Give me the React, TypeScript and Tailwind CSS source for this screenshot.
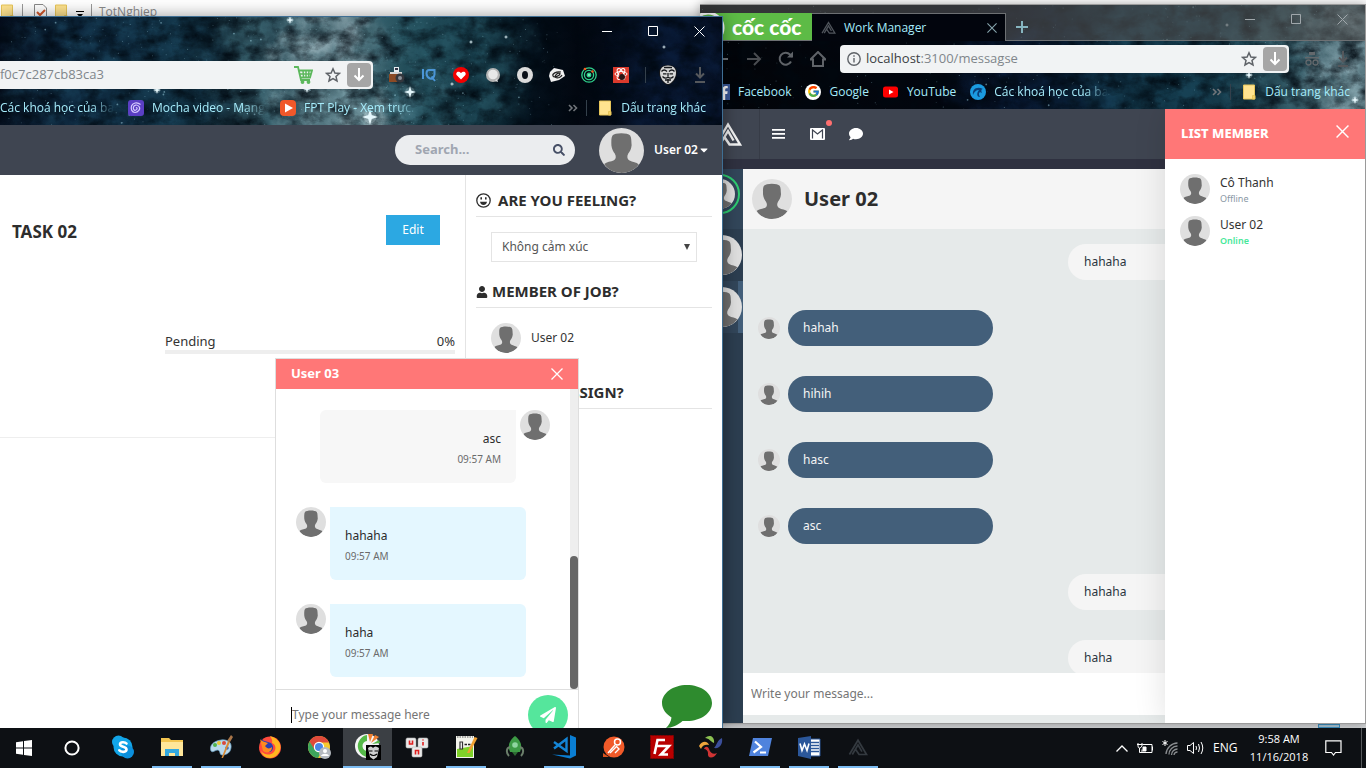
import React from "react";
import type { ReactNode } from "react";
import { FcGoogle } from "react-icons/fc";
import {
  FaCaretDown,
  FaComment,
  FaFacebookF,
  FaPaperPlane,
  FaSearch,
  FaUser,
} from "react-icons/fa";

/* ---------- shared drawings ---------- */

function Avatar({ className }: { className: string }) {
  return (
    <svg viewBox="0 0 120 120" className={`shrink-0 rounded-full ${className}`} aria-hidden="true">
      <rect width="120" height="120" fill="#dfdfdf" />
      <path
        fill="#6f6f6f"
        d="M36 20C42 12 77 12 83 20C87 26 86 36 87 46C86 57 82 63 78 68C74 75 75 82 80 86C90 92 100 91 106 97C95 113 78 120 60 120C42 120 24 113 14 96C20 90 32 90 40 86C46 82 46 75 42 68C38 63 34 56 33 46C33 36 32 26 36 20Z"
      />
    </svg>
  );
}

type Cloud = [number, number, number, number, string, number];

function Galaxy({ id, base, clouds, bright, count, width }: { id: string; base: [string, string][]; clouds: Cloud[]; bright: [number, number, number][]; count: number; width: number }) {
  let s = id.length * 7919 + 17;
  const rnd = () => {
    s = (s * 16807) % 2147483647;
    return s / 2147483647;
  };
  const stars = Array.from({ length: count }, () => [rnd() * width, rnd() * 110, rnd()]);
  return (
    <svg className="absolute inset-0 h-full w-full" aria-hidden="true">
      <defs>
        <linearGradient id={`${id}-base`}>
          {base.map(([offset, color]) => (
            <stop key={offset} offset={offset} stopColor={color} />
          ))}
        </linearGradient>
        <filter id={`${id}-cloud`} x="-20%" y="-60%" width="140%" height="220%" colorInterpolationFilters="sRGB">
          <feGaussianBlur stdDeviation="12" result="b" />
          <feTurbulence type="fractalNoise" baseFrequency="0.04" numOctaves="5" seed="8" result="n" />
          <feDisplacementMap in="b" in2="n" scale="60" xChannelSelector="R" yChannelSelector="G" result="d" />
          <feTurbulence type="fractalNoise" baseFrequency="0.05" numOctaves="6" seed="21" />
          <feColorMatrix values="0 0 0 0 1  0 0 0 0 1  0 0 0 0 1  2 0 0 0 -0.45" result="m" />
          <feComposite in="d" in2="m" operator="in" />
        </filter>
        <filter id={`${id}-grain`} x="0" y="0" width="100%" height="100%" colorInterpolationFilters="sRGB">
          <feTurbulence type="fractalNoise" baseFrequency="0.05 0.07" numOctaves="6" seed="5" />
          <feColorMatrix values="0 0 0 0 0  0 0 0 0 0.03  0 0 0 0 0.06  0 1.8 0 0 -0.7" />
        </filter>
      </defs>
      <rect width="100%" height="100%" fill={`url(#${id}-base)`} />
      <g filter={`url(#${id}-cloud)`}>
        {clouds.map(([x, y, rx, ry, c, o], i) => (
          <ellipse key={i} cx={x} cy={y} rx={rx} ry={ry} fill={c} opacity={o} />
        ))}
      </g>
      <rect width="100%" height="100%" filter={`url(#${id}-grain)`} />
      {stars.map(([x, y, r], i) => (
        <circle key={i} cx={x} cy={y} r={r > 0.95 ? 0.9 : 0.5} fill="#9fd0e0" opacity={0.12 + r * 0.4} />
      ))}
      {bright.map(([x, y, r], i) => (
        <g key={i} fill="#e4f6fb">
          <circle cx={x} cy={y} r={r * 1.6} opacity="0.25" />
          <path d={`M${x - r * 2} ${y}L${x} ${y - r * 0.6}L${x + r * 2} ${y}L${x} ${y + r * 0.6}ZM${x} ${y - r * 2}L${x + r * 0.6} ${y}L${x} ${y + r * 2}L${x - r * 0.6} ${y}Z`} />
        </g>
      ))}
    </svg>
  );
}

function WindowButtons({ color, height }: { color: string; height: string }) {
  const cell = `flex w-[46px] items-center justify-center ${height} ${color}`;
  return (
    <div className="ml-auto flex shrink-0">
      <button aria-label="Minimize" className={cell}>
        <svg width="11" height="11" fill="none" stroke="currentColor"><path d="M0 5.5H10" /></svg>
      </button>
      <button aria-label="Maximize" className={cell}>
        <svg width="11" height="11" fill="none" stroke="currentColor"><path d="M.5 .5H9.5V9.5H.5Z" /></svg>
      </button>
      <button aria-label="Close" className={cell}>
        <svg width="11" height="11" fill="none" stroke="currentColor"><path d="M.5 .5L10.5 10.5M10.5 .5L.5 10.5" /></svg>
      </button>
    </div>
  );
}

function Cross({ className }: { className: string }) {
  return (
    <svg viewBox="0 0 12 12" className={className} fill="none" stroke="currentColor" strokeWidth="1.3" aria-hidden="true">
      <path d="M.5 .5L11.5 11.5M11.5 .5L.5 11.5" />
    </svg>
  );
}

function StarIcon() {
  return (
    <svg width="16" height="16" viewBox="0 0 16 16" fill="none" stroke="#5f6368" strokeWidth="1.5" aria-hidden="true">
      <path d="M8 1.8L9.9 6L14.4 6.4L11 9.4L12 13.9L8 11.5L4 13.9L5 9.4L1.6 6.4L6.1 6Z" />
    </svg>
  );
}

function SaveButton() {
  return (
    <button aria-label="Save" className="flex h-6 w-6 items-center justify-center rounded-sm bg-[#a6a6a6]">
      <svg width="12" height="14" viewBox="0 0 12 14" fill="none" stroke="#fff" strokeWidth="2"><path d="M6 0V12M1.5 7.5L6 12L10.5 7.5" /></svg>
    </button>
  );
}

function DownloadIcon() {
  return (
    <svg width="12" height="16" viewBox="0 0 12 16" fill="none" stroke="#55585c" strokeWidth="2" aria-hidden="true">
      <path d="M6 0V10M2 6.5L6 10.5L10 6.5M1 15H11" />
    </svg>
  );
}

function CartIcon() {
  return (
    <svg width="19" height="18" viewBox="0 0 19 18" fill="none" stroke="#5cb85c" strokeWidth="1.8" aria-hidden="true">
      <path d="M0 1H4L7 14H16M5 4.500H18L16 11.500H6.500" />
      <path d="M5.500 8H17M9 4.500L9.500 11.500M12 4.500V11.500M15 4.500L14.500 11.500" strokeWidth="1.5" />
      <circle cx="8.500" cy="16" r="1" />
      <circle cx="14.500" cy="16" r="1" />
    </svg>
  );
}

function SmileIcon({ className }: { className: string }) {
  return (
    <svg viewBox="0 0 15 15" className={className} fill="none" stroke="#2d2d2d" strokeWidth="1.300" aria-hidden="true">
      <circle cx="7.500" cy="7.500" r="6.700" />
      <path d="M4 8.800H11C10.500 11 9.300 12 7.500 12S4.500 11 4 8.800Z" fill="#2d2d2d" stroke="none" />
      <path d="M5.200 4.200V6.400M9.800 4.200V6.400" strokeWidth="1.600" />
    </svg>
  );
}

function Folder() {
  return (
    <svg width="14" height="16" viewBox="0 0 14 16" className="shrink-0" aria-hidden="true">
      <path d="M.5 1H11.5V15H.5Z" fill="#ffe38f" stroke="#e8c65a" />
      <path d="M9.5 11.5H12V15H9.5Z" fill="#f7d266" stroke="#e8c65a" />
    </svg>
  );
}

function Bookmark({ icon, label, faded }: { icon?: ReactNode; label: string; faded?: boolean }) {
  return (
    <a href="#" className="flex shrink-0 items-center gap-2">
      {icon}
      <span className={faded ? "w-[114px] whitespace-nowrap [mask-image:linear-gradient(to_right,#000_80%,transparent)]" : "whitespace-nowrap"}>{label}</span>
    </a>
  );
}

function OtherBookmarks() {
  return (
    <div className="ml-auto flex shrink-0 items-center">
      <button aria-label="More bookmarks" className="mr-2 text-[#70757a]">
        <svg width="10" height="8" viewBox="0 0 10 8" fill="none" stroke="currentColor" strokeWidth="1.6"><path d="M1 1L4 4L1 7M5.5 1L8.5 4L5.5 7" /></svg>
      </button>
      <span className="mr-3 h-4 w-px bg-[#34404b]" />
      <Bookmark icon={<Folder />} label="Dấu trang khác" />
    </div>
  );
}

function Triangle({ className, color }: { className: string; color: string }) {
  return (
    <svg viewBox="0 0 28 24" className={className} fill="none" stroke={color} strokeWidth="2.4" aria-hidden="true">
      <path d="M2 22.5L14 2.5L26 22.5H15.5L10 14.5M6 22.5L14 9L19.5 18.5" />
    </svg>
  );
}

/* ---------- work manager: task page ---------- */

const ic = "h-4 w-4 shrink-0";

const extensions: [string, ReactNode][] = [
  ["Camera", <svg viewBox="0 0 16 16" className={ic}><path d="M5 0H10V5H5Z" fill="#e8edf0" /><path d="M6 1H9V3H6Z" fill="#334" /><path d="M1 5H13V9H1Z" fill="#d6d6d6" /><path d="M0 7H9V15H0Z" fill="#8a4a25" /><circle cx="11" cy="11" r="4.5" fill="#34373d" /><circle cx="11" cy="11" r="2" fill="#8a8f98" /></svg>],
  ["IQ", <svg viewBox="0 0 16 16" className={ic} fill="none" stroke="#4b95d6" strokeWidth="2"><path d="M2 2V12" /><path d="M12.5 3H8Q5.500 3 5.500 6.500T9 11.500T13.500 7.500V2M10.500 9.500L14 14" /></svg>],
  ["Favourites", <svg viewBox="0 0 16 16" className={ic}><circle cx="8" cy="8" r="8" fill="#f40000" /><path d="M8 12.5L3.800 8.300C2 6 5 3 8 6C11 3 14 6 12.200 8.300Z" fill="#fff" /></svg>],
  ["Lens", <svg viewBox="0 0 16 16" className={ic}><circle cx="8" cy="8" r="7" fill="#b5b5b5" /><circle cx="8" cy="7.500" r="4.800" fill="#e8e8e8" /><path d="M10 14L12 12L13 15Z" fill="#e0e0e0" /></svg>],
  ["Ring", <svg viewBox="0 0 16 16" className={ic}><circle cx="8" cy="8" r="8" fill="#dcdcdc" /><ellipse cx="8" cy="8" rx="3" ry="4" fill="#0a0f18" /></svg>],
  ["Swirl", <svg viewBox="0 0 16 16" className={ic}><path d="M1 5L5 1L14 3L16 9L10 13L2 15L0 9Z" fill="#f1f1f1" /><path d="M12 5C7 4 3 7 4 9S11 9 11 6.500C9 5 6 8 6 10C9 12 12 10 13 8" fill="none" stroke="#222" strokeWidth="1.200" /></svg>],
  ["Orbit", <svg viewBox="0 0 16 16" className={ic} fill="none" stroke="#2fd28c" strokeWidth="1.300"><circle cx="8" cy="8" r="7.200" /><circle cx="8" cy="8" r="4.600" /><circle cx="8" cy="8" r="1.800" fill="#7deeb9" /><circle cx="11.500" cy="4.500" r="1.200" fill="#f4591f" stroke="none" /><circle cx="4" cy="2" r="1.300" fill="#f4591f" stroke="none" /></svg>],
  ["React", <svg viewBox="0 0 16 16" className={ic}><rect width="16" height="16" fill="#dc3a2c" /><g fill="none" stroke="#fff"><ellipse cx="8" cy="7" rx="6" ry="2.500" /><ellipse cx="8" cy="7" rx="6" ry="2.500" transform="rotate(60 8 7)" /><ellipse cx="8" cy="7" rx="6" ry="2.500" transform="rotate(120 8 7)" /></g><circle cx="9" cy="10" r="3" fill="#2a1414" /></svg>],
];

function MaskIcon({ className }: { className: string }) {
  return (
    <svg viewBox="0 0 18 20" className={className} aria-hidden="true">
      <path d="M9 0C15 0 18 3 18 8C18 13 13 20 9 20S0 13 0 8C0 3 3 0 9 0Z" fill="#16181b" />
      <path d="M9 .500C14.500 .500 17 3.500 17 8C17 13 12.500 19 9 19S1 13 1 8C1 3.500 3.500 .500 9 .500Z" fill="#d5d5d5" />
      <path d="M2.500 6.500Q5 3.500 8 6.500M15.500 6.500Q13 3.500 10 6.500M4 8.800H7.500M10.500 8.800H14M9 8V11M3.500 11.500Q6.500 14.500 9 12Q11.500 14.500 14.500 11.500M9 14V18M6 15H12M5 2.500H13" fill="none" stroke="#16181b" strokeWidth="1.300" />
    </svg>
  );
}

function SideHeading({ icon, children }: { icon: ReactNode; children: ReactNode }) {
  return (
    <h2 className="flex h-8 items-center border-b border-[#e4e4e4] text-[15px] font-bold text-[#2d2d2d]">
      {icon}
      {children}
    </h2>
  );
}

function ChatBubble({ text, mine }: { text: string; mine?: boolean }) {
  return (
    <li className={`flex items-start gap-1 ${mine ? "flex-row-reverse" : ""}`}>
      <Avatar className="h-[30px] w-[30px]" />
      <div className={`flex h-[73px] w-[196px] flex-col px-[15px] pt-5 ${mine ? "items-end rounded-md rounded-tr-none bg-[#f7f7f7]" : "rounded-md rounded-tl-none bg-[#e4f7ff]"}`}>
        <p className="text-xs leading-[18px] text-[#2b2b2b]">{text}</p>
        <time className="text-[10px] leading-[22px] text-[#6b6b6b]">09:57 AM</time>
      </div>
    </li>
  );
}

function ChatPopup() {
  return (
    <section className="absolute left-[275px] top-[341px] flex h-[390px] w-[304px] flex-col border border-[#dedede] bg-white">
      <header className="flex h-[30px] shrink-0 items-center justify-between bg-[#ff7777] px-[15px] text-white">
        <h3 className="text-[13px] font-bold">User 03</h3>
        <button aria-label="Close chat"><Cross className="h-3 w-3" /></button>
      </header>
      <div className="flex h-[300px] shrink-0">
        <ul className="flex flex-1 flex-col gap-6 px-5 pt-[21px]">
          <ChatBubble text="asc" mine />
          <ChatBubble text="hahaha" />
          <ChatBubble text="haha" />
        </ul>
        <div className="flex w-2 flex-col justify-end bg-[#eeeeee]">
          <div className="h-[133px] rounded-full bg-[#666666]" />
        </div>
      </div>
      <div className="flex flex-1 items-start justify-between border-t border-[#dedede] pl-[15px] pr-[10px] pt-[5px]">
        <div className="flex h-10 items-center">
          <span className="h-4 w-px bg-black" />
          <input aria-label="Message" placeholder="Type your message here" className="w-44 text-xs outline-none placeholder:text-[#757575]" />
        </div>
        <button aria-label="Send" className="flex h-10 w-10 items-center justify-center rounded-full bg-[#55e69c] text-white">
          <FaPaperPlane className="h-4 w-4" />
        </button>
      </div>
    </section>
  );
}

function TaskWindow() {
  return (
    <div className="absolute bottom-0 left-0 top-4 flex w-[723px] flex-col overflow-hidden border-r border-t border-[#3f6f94] bg-white shadow-[0_0_16px_rgba(0,0,0,0.4)]">
      <div className="relative flex h-[108px] shrink-0 flex-col text-xs">
        <Galaxy
          id="galaxyleft"
          width={560}
          count={380}
          base={[["0", "#040b19"], ["0.1", "#0b2238"], ["0.24", "#0f2c3d"], ["0.29", "#0a1d28"], ["0.38", "#2c4d59"], ["0.48", "#52737c"], ["0.56", "#234e5a"], ["0.66", "#113340"], ["0.74", "#04101b"], ["0.8", "#020710"], ["0.93", "#061227"], ["1", "#050e20"]]}
          bright={[[290, 3, 2], [157, 73, 2], [307, 72, 2], [410, 75, 3], [370, 100, 4], [471, 25, 1], [506, 20, 1], [664, 30, 1], [452, 67, 1]]}
          clouds={[
            [120, 60, 120, 80, "#1d4a63", 0.6],
            [270, 50, 50, 80, "#41707e", 0.7],
            [330, 40, 60, 50, "#8fa9b1", 0.9],
            [330, 80, 60, 30, "#6d909a", 0.9],
            [390, 90, 60, 40, "#5f8b96", 0.8],
            [440, 50, 80, 80, "#2a5a68", 0.7],
            [370, 100, 26, 22, "#bcd6dc", 0.9],
            [680, 60, 60, 70, "#0e2a55", 0.4],
          ]}
        />
        <div className="relative flex h-10 shrink-0"><WindowButtons color="text-white" height="h-[29px]" /></div>
        <div className="relative flex h-9 shrink-0 items-center pr-4">
          <div className="flex h-7 w-[373px] shrink-0 items-center rounded-r bg-[#f1f3f4] pr-[2px]">
            <input aria-label="Address" readOnly value="f0c7c287cb83ca3" className="w-40 font-['Open_Sans',sans-serif] text-[13px] text-[#80868b] outline-none" />
            <div className="ml-auto flex items-center gap-[6px]">
              <span className="mr-[6px]"><CartIcon /></span>
              <StarIcon />
              <SaveButton />
            </div>
          </div>
          <div className="ml-4 flex gap-4">
            {extensions.map(([label, icon]) => (
              <button key={label} aria-label={label}>{icon}</button>
            ))}
          </div>
          <span className="ml-4 h-4 w-px bg-[#34404b]" />
          <div className="ml-auto flex items-center gap-[17px]">
            <MaskIcon className="h-5 w-[18px]" />
            <DownloadIcon />
          </div>
        </div>
        <div className="relative flex h-[29px] items-center gap-[14px] pr-4 font-['Open_Sans',sans-serif] text-[#a6ecfb]">
          <Bookmark label="Các khoá học của ba" faded />
          <Bookmark
            label="Mocha video - Mạng"
            faded
            icon={<svg viewBox="0 0 16 16" className={ic}><rect width="16" height="16" rx="3" fill="#5b3fc4" /><path d="M8 8C9 7 10 9 8 10S5 9 5.500 7S9 4 11 6.500S10 12.500 7 12.500S2.500 9 3.500 6S9 1.500 12.500 4.500" fill="none" stroke="#d6caff" strokeWidth="1.200" /></svg>}
          />
          <Bookmark
            label="FPT Play - Xem trực."
            faded
            icon={<svg viewBox="0 0 16 16" className={ic}><rect width="16" height="16" rx="4" fill="#f0582a" /><path d="M5 3.500L13 8L5 12.500Z" fill="#fff" /></svg>}
          />
          <OtherBookmarks />
        </div>
      </div>

      <header className="flex h-[50px] shrink-0 items-center justify-end bg-[#3f4551] pr-[14px]">
        <label className="mr-6 flex h-[30px] w-[180px] items-center justify-between rounded-full bg-[#ebedef] pl-5 pr-[10px]">
          <input aria-label="Search" placeholder="Search..." className="w-28 text-[13px] font-bold outline-none placeholder:text-[#a0a6b1]" />
          <FaSearch className="h-3 w-3 text-[#475067]" />
        </label>
        <Avatar className="h-[45px] w-[45px]" />
        <button className="ml-[10px] flex items-center text-xs font-semibold text-white">
          User 02
          <FaCaretDown className="ml-[2px] h-3 w-2" />
        </button>
      </header>

      <main className="flex flex-1 overflow-hidden">
        <div className="flex flex-1 flex-col">
          <div className="flex h-[263px] w-full flex-col border-b border-[#eeeeee] pt-10">
            <div className="flex h-[30px] items-center justify-between pl-3 pr-[25px]">
              <h1 className="mt-1 text-[17px] font-bold text-[#2d2d2d]">TASK 02</h1>
              <button className="h-[30px] w-[54px] bg-[#2ca8e2] text-xs text-white">Edit</button>
            </div>
            <div className="ml-[165px] mr-[10px] mt-[87px]">
              <div className="flex items-end justify-between text-[13px] leading-[18px] text-[#333333]">
                <span>Pending</span>
                <span>0%</span>
              </div>
              <div className="h-1 bg-[#eeeeee]" />
            </div>
          </div>
        </div>
        <aside className="w-[257px] border-l border-[#e4e4e4] px-[10px] pt-[10px]">
          <SideHeading icon={<SmileIcon className="mr-[7px] h-[15px] w-[15px]" />}>ARE YOU FEELING?</SideHeading>
          <div className="relative mx-[15px] mt-[15px]">
            <select aria-label="Feeling" className="h-[30px] w-full appearance-none border border-[#e4e4e4] bg-white px-[10px] text-xs text-[#555555]">
              <option>Không cảm xúc</option>
            </select>
            <svg viewBox="0 0 6 6" className="absolute right-[7px] top-3 h-[6px] w-[6px]" aria-hidden="true"><path d="M0 0H6L3 6Z" fill="#444" /></svg>
          </div>
          <div className="mt-[14px]">
            <SideHeading icon={<FaUser className="mr-1 h-3 w-3" />}>MEMBER OF JOB?</SideHeading>
          </div>
          <div className="mx-[15px] mb-6 mt-[15px] flex h-[30px] items-center gap-[10px] text-xs text-[#333333]">
            <Avatar className="h-[30px] w-[30px]" />
            User 02
          </div>
          <SideHeading icon={<FaUser className="mr-1 h-3 w-3" />}>MEMBER ASSIGN?</SideHeading>
        </aside>
      </main>

      <ChatPopup />
      <button aria-label="Open chat" className="absolute bottom-0 right-[9px]">
        <svg viewBox="0 0 52 43" className="block h-[43px] w-[52px]"><path d="M26 0C40 0 51 8 51 18C51 28 40 36 26 36C24 36 23 36 21.500 36C17 40 11 43 5 43C8 40 10 37 10.500 32.500C5 29 1 24 1 18C1 8 12 0 26 0Z" fill="#2e8b2e" /></svg>
      </button>
    </div>
  );
}

/* ---------- work manager: message page ---------- */

function Message({ text, mine }: { text: string; mine?: boolean }) {
  if (mine) {
    return <li className="ml-[325px] flex h-9 w-[205px] shrink-0 items-center rounded-full bg-[#f5f5f5] px-4 text-[#2b3540]">{text}</li>;
  }
  return (
    <li className="ml-[15px] flex h-9 shrink-0 items-center gap-2 text-[#f5f5f5]">
      <Avatar className="h-[22px] w-[22px]" />
      <span className="flex h-9 w-[205px] items-center rounded-full bg-[#435f7a] px-[15px]">{text}</span>
    </li>
  );
}

function Member({ name, status, tone }: { name: string; status: string; tone: string }) {
  return (
    <li className="flex items-start gap-[10px]">
      <Avatar className="h-[30px] w-[30px]" />
      <div>
        <p className="text-xs leading-[18px] text-[#333333]">{name}</p>
        <p className={`text-[9px] leading-[14px] ${tone}`}>{status}</p>
      </div>
    </li>
  );
}

function MessageWindow() {
  return (
    <div className="absolute bottom-1 left-[700px] right-0 top-1 flex flex-col overflow-hidden border-b border-r border-t border-[#9a9a9a] bg-white shadow-[0_0_10px_rgba(0,0,0,0.35)]">
      <div className="relative flex h-[104px] shrink-0 flex-col text-xs">
        <Galaxy
          id="galaxyright1"
          width={666}
          count={300}
          base={[["0", "#020408"], ["0.38", "#02060f"], ["0.48", "#050f20"], ["0.6", "#09202f"], ["0.7", "#0f3040"], ["0.82", "#12323f"], ["0.9", "#2c4c57"], ["1", "#56757e"]]}
          bright={[[549, 70, 2], [527, 20, 1], [655, 95, 2]]}
          clouds={[
            [340, 70, 90, 50, "#0c2850", 0.5],
            [470, 50, 90, 80, "#1d4d63", 0.6],
            [590, 40, 60, 80, "#3f707d", 0.6],
            [640, 50, 40, 50, "#8ba9b1", 0.8],
            [655, 90, 30, 30, "#8ba9b1", 0.8],
          ]}
        />
        <div className="relative flex h-9 shrink-0 border-b border-[#6d7073] bg-[#555555]/60">
          <div className="mt-2 flex w-[112px] shrink-0 items-center bg-[#5dbb46] text-white">
            <svg viewBox="0 0 26 28" className="h-7 w-[26px]" aria-hidden="true"><circle cx="8" cy="15" r="15" fill="none" stroke="#fff" strokeWidth="3" /></svg>
            <span className="ml-[6px] font-['Lato',sans-serif] text-[21px] font-black leading-7">cốc cốc</span>
          </div>
          <div className="-mb-px mt-2 flex w-[194px] shrink-0 items-center border-r border-t border-[#6d7073] bg-[#02050d] pl-[9px] pr-2 text-[#a6ecfb]">
            <Triangle className="mr-2 h-[13px] w-[15px]" color="#50555c" />
            <span className="font-['Open_Sans',sans-serif]">Work Manager</span>
            <button aria-label="Close tab" className="ml-auto text-[#87a5ae]"><Cross className="h-[10px] w-[10px]" /></button>
          </div>
          <button aria-label="New tab" className="ml-[10px] mt-2 text-[#87b5c0]">
            <svg width="12" height="12" fill="none" stroke="currentColor" strokeWidth="2"><path d="M6 0V12M0 6H12" /></svg>
          </button>
          <WindowButtons color="text-[#a0a7ab]" height="h-[29px]" />
        </div>
        <div className="relative flex h-9 shrink-0 items-center pl-[14px] pr-4 text-[#5f6368]">
          <div className="flex gap-4">
            <button aria-label="Back"><svg viewBox="0 0 16 16" className={ic} fill="none" stroke="#70757a" strokeWidth="2"><path d="M1 8H14M8 2L2 8L8 14" /></svg></button>
            <button aria-label="Forward"><svg viewBox="0 0 16 16" className={ic} fill="none" stroke="#4a4d51" strokeWidth="2"><path d="M1 8H14M8 2L14 8L8 14" /></svg></button>
            <button aria-label="Reload"><svg viewBox="0 0 16 16" className={ic} fill="none" stroke="currentColor" strokeWidth="2"><path d="M13 10.500A6 6 0 1 1 12 3.500L14 6" /><path d="M9 6.500H15V.500Z" fill="currentColor" stroke="none" /></svg></button>
            <button aria-label="Home"><svg viewBox="0 0 16 16" className={ic} fill="none" stroke="currentColor" strokeWidth="2"><path d="M.5 8.500L8 1L15.500 8.500H13V15H3V8.500Z" /></svg></button>
          </div>
          <div className="ml-[14px] flex h-7 flex-1 items-center rounded bg-[#f1f3f4] pl-[7px] pr-[2px]">
            <svg width="14" height="14" viewBox="0 0 14 14" fill="none" stroke="#5f6368" strokeWidth="1.400" aria-hidden="true"><circle cx="7" cy="7" r="6.200" /><path d="M7 6V10.500M7 3.200V4.800" /></svg>
            <p className="ml-[5px] font-['Open_Sans',sans-serif] text-[13px] text-[#80868b]"><span className="text-[#3c4043]">localhost</span>:3100/messagse</p>
            <div className="ml-auto flex items-center gap-[6px]"><StarIcon /><SaveButton /></div>
          </div>
          <svg width="14" height="14" viewBox="0 0 14 14" className="ml-4 mr-[18px]" aria-hidden="true"><path d="M4 0H10V3H4ZM0 5H14V6.500H0Z" fill="#63686c" /><g fill="none" stroke="#63686c" strokeWidth="1.300"><circle cx="3.500" cy="10.500" r="2.500" /><circle cx="10.500" cy="10.500" r="2.500" /></g></svg>
          <DownloadIcon />
        </div>
        <div className="relative flex h-[29px] items-center gap-[14px] pl-[14px] pr-[15px] font-['Open_Sans',sans-serif] text-[#a6ecfb]">
          <Bookmark label="Facebook" icon={<span className="flex h-4 w-4 items-end justify-end bg-[#3b5998] text-white"><FaFacebookF className="h-[14px] w-3" /></span>} />
          <Bookmark label="Google" icon={<span className="flex h-4 w-4 items-center justify-center rounded-full bg-white"><FcGoogle className="h-[13px] w-[13px]" /></span>} />
          <Bookmark label="YouTube" icon={<svg viewBox="0 0 16 16" className={ic}><rect y="2.500" width="15" height="11" rx="2.500" fill="#f00" /><path d="M6 5.500L10.500 8L6 10.500Z" fill="#fff" /></svg>} />
          <Bookmark label="Các khoá học của ba" faded icon={<svg viewBox="0 0 16 16" className={ic}><circle cx="8" cy="8" r="8" fill="#1b9be0" /><path d="M3 11C2 5 7 2 13 5C11 5 11 7 12 9C9 7 8 10 10 13C6 13 7 8 9 6C6 6 4 8 3 11Z" fill="#0b3f78" /></svg>} />
          <OtherBookmarks />
        </div>
      </div>

      <div className="relative flex flex-1 flex-col overflow-hidden">
        <header className="flex h-[50px] shrink-0 items-center bg-[#3f4551] text-white">
          <div className="flex h-full w-[60px] items-center border-r border-[#373c47] pl-[14px]"><Triangle className="h-6 w-7" color="#f2f2f2" /></div>
          <button aria-label="Menu" className="ml-3"><svg viewBox="0 0 13 10" className="h-[10px] w-[13px]" fill="#fff"><path d="M0 0H13V1.800H0ZM0 4H13V5.800H0ZM0 8H13V9.800H0Z" /></svg></button>
          <button aria-label="Mail" className="relative ml-[25px]">
            <svg viewBox="0 0 15 12" className="h-3 w-[15px]"><rect width="15" height="12" rx="1" fill="#fff" /><path d="M2 1.500L7.500 6L13 1.500M2.500 10.500V2M12.500 10.500V2" fill="none" stroke="#3f4551" strokeWidth="1.200" /></svg>
            <span className="absolute -right-[7px] -top-2 h-[6px] w-[6px] rounded-full bg-[#ff6f6f]" />
          </button>
          <button aria-label="Chat" className="ml-6"><FaComment className="h-[14px] w-[14px]" /></button>
        </header>
        <div className="h-[10px] shrink-0 bg-[#2f3140]" />
        <div className="flex flex-1 overflow-hidden">
          <nav aria-label="Contacts" className="w-[43px] shrink-0 bg-[#2c3e50]">
            <div className="flex h-[60px] items-start justify-end bg-[#32465a] pr-[3px] pt-[5px]">
              <span className="flex h-10 w-10 shrink-0 items-center justify-center rounded-full border-2 border-[#2ecc71]"><Avatar className="h-[30px] w-[30px]" /></span>
            </div>
            <div className="flex h-[52px] items-center pl-[2px]"><Avatar className="h-10 w-10" /></div>
            <div className="flex h-[52px] items-center bg-[linear-gradient(to_right,#32465a_38px,#435f7a_38px)] pl-[2px]"><Avatar className="h-10 w-10" /></div>
          </nav>
          <main className="flex flex-1 flex-col bg-[#e6eaea]">
            <div className="flex h-[60px] shrink-0 items-center gap-3 bg-[#f5f5f5] pl-[9px]">
              <Avatar className="h-10 w-10" />
              <h1 className="text-xl font-bold text-[#2d2d2d]">User 02</h1>
            </div>
            <ul className="flex h-px flex-1 flex-col gap-[30px] overflow-hidden pt-[15px] text-xs">
              <Message text="hahaha" mine />
              <Message text="hahah" />
              <Message text="hihih" />
              <Message text="hasc" />
              <Message text="asc" />
              <Message text="hahaha" mine />
              <Message text="haha" mine />
            </ul>
            <div className="mb-2 flex h-[42px] shrink-0 bg-white">
              <input aria-label="Write your message" placeholder="Write your message..." className="flex-1 px-2 text-xs outline-none placeholder:text-[#757575]" />
            </div>
          </main>
        </div>
        <aside className="absolute bottom-0 right-0 top-0 w-[200px] bg-white shadow-[0_0_30px_rgba(0,0,0,0.12)]">
          <header className="flex h-[50px] justify-between bg-[#ff7777] px-4 text-white">
            <h2 className="self-center text-[13px] font-extrabold">LIST MEMBER</h2>
            <button aria-label="Close list" className="mt-4 self-start"><Cross className="h-[13px] w-[13px]" /></button>
          </header>
          <ul className="flex flex-col gap-[10px] px-[15px] pt-[15px]">
            <Member name="Cô Thanh" status="Offline" tone="text-[#8a98a5]" />
            <Member name="User 02" status="Online" tone="font-semibold text-[#46e89a]" />
          </ul>
        </aside>
      </div>
    </div>
  );
}

/* ---------- taskbar ---------- */

const big = "h-6 w-6";

const apps: { name: string; icon: ReactNode; open?: boolean; active?: boolean }[] = [
  { name: "Skype", icon: <svg viewBox="0 0 24 24" className={big}><circle cx="12" cy="12" r="9.500" fill="#12a5e8" /><circle cx="7.500" cy="7" r="6.500" fill="#12a5e8" /><circle cx="16.500" cy="17" r="6.500" fill="#0b8fdc" /><path d="M15.500 8.500C14 6.800 9 6.500 9 9.300C9 12.500 15.500 11 15.500 14.500C15.500 17.500 10 17.500 8.300 15.300" fill="none" stroke="#fff" strokeWidth="2.600" strokeLinecap="round" /></svg> },
  { name: "Explorer", open: true, icon: <svg viewBox="0 0 24 24" className={big}><path d="M1 3H9L11 5H23V21H1Z" fill="#f3c550" /><path d="M1 7H23V21H1Z" fill="#ffe69a" /><path d="M5 21V14H19V21H15V18H9V21Z" fill="#34a9e0" /></svg> },
  { name: "Paint", open: true, icon: <svg viewBox="0 0 24 24" className={big}><path d="M12 5C19 4 23 8 22 13C21 19 16 20 13 20C10 20 12 16 9 15C6 15 4 18 2 16C0 11 4 6 12 5Z" fill="#b9d9ec" stroke="#6da5c8" strokeWidth=".700" /><circle cx="6" cy="10" r="2" fill="#4fb34f" /><circle cx="10" cy="8" r="2" fill="#e8c534" /><circle cx="15" cy="8" r="2" fill="#d94a3c" /><circle cx="18" cy="13" r="1.800" fill="#3866b8" /><path d="M12.500 23L19 6L21 7L14 23Z" fill="#d98a35" /><path d="M18 6L22 0L24 2L21 7Z" fill="#a9764a" /></svg> },
  { name: "Firefox", icon: <svg viewBox="0 0 24 24" className={big}><circle cx="12" cy="12.500" r="11" fill="#ff4a3d" /><path d="M12 1C20 3 24 9 22 15C20 21 15 23 12 23C7 23 4 20 3 16C6 20 12 21 16 17C19 13 17 9 14 8C15 5 13 3 12 1Z" fill="#ffb61f" /><path d="M3 3C5 7 9 6 13 8C16 11 16 15 12 17C8 17 6 15 6 11Z" fill="#2b3fb0" /><path d="M2 4C4 7 8 7 10 8L7 11C9 14 12 14 14 12C14 17 9 19 5 16Z" fill="#ff8a1f" /></svg> },
  { name: "Chrome", icon: <svg viewBox="0 0 24 24" className={big}><circle cx="12" cy="12" r="11" fill="#f7c92f" /><path d="M2.500 6.500A11 11 0 0 1 22 7.500H12L7 15Z" fill="#df4a3b" /><path d="M2.500 6.500A11 11 0 0 0 11 23L16 14.500L7.500 14.500Z" fill="#3ca55c" /><circle cx="12" cy="12" r="5.200" fill="#fff" /><circle cx="12" cy="12" r="4" fill="#4a86e8" /><circle cx="18" cy="18" r="6" fill="#b5bac0" /><circle cx="18" cy="16" r="2" fill="#fff" /><path d="M14 21C15 18 21 18 22 21Z" fill="#fff" /></svg> },
  { name: "Coc Coc", open: true, active: true, icon: <svg viewBox="0 0 26 26" className="h-[26px] w-[26px]"><circle cx="12" cy="12" r="12" fill="#f4f4f4" /><path d="M12 1A11 11 0 1 0 16 23L13 17A5 5 0 1 1 12 7Z" fill="#55b948" /><path d="M13 0L15 8L18 0ZM20 1L16 9L24 3Z" fill="#f08030" /><path d="M24 6L17 10L25 9Z" fill="#55b948" /><rect x="11" y="11" width="15" height="15" fill="#000" /><path d="M13 14Q16 11 18 14Q20 11 24 14L22 23L18.500 25.500L15 23Z" fill="#cfcfcf" /><path d="M14 17H17.500M19.500 17H23M15 20Q18.500 23 22 20" stroke="#000" strokeWidth="1.200" fill="none" /></svg> },
  { name: "UniKey", icon: <svg viewBox="0 0 24 24" className={big}><g fill="#e9e9e9" stroke="#b5b5b5" strokeWidth=".600"><rect x="1" y="3" width="10" height="10" rx="1.500" /><rect x="13" y="3" width="10" height="10" rx="1.500" /><rect x="7" y="12" width="10" height="10" rx="1.500" /></g><path d="M4.500 5.500V9H7.500V5.500M18 7V10.500M18 4.500V5.500M10.500 19.500V15.500H13.500V19.500" fill="none" stroke="#e02020" strokeWidth="1.600" /></svg> },
  { name: "Notepad++", open: true, icon: <svg viewBox="0 0 24 24" className={big}><path d="M2 1H20V23H2Z" fill="#f4f5ee" /><path d="M3 14L19 11V22H3Z" fill="#7fd129" /><path d="M3 2H19" stroke="#8a8a8a" strokeWidth="1.500" strokeDasharray="1.500 1" /><path d="M6 7H8.500V14H6Z" fill="#fff" stroke="#333" strokeWidth="1.200" /><path d="M10.500 9.500H13M14 9.500H16.500" stroke="#222" strokeWidth="1.400" /><path d="M13 18L20.500 2L23.500 3L15.500 18Z" fill="#f0a030" /></svg> },
  { name: "Rocket", icon: <svg viewBox="0 0 24 24" className={big}><path d="M12 1C17 5 20 10 17 17H7C4 10 7 5 12 1Z" fill="#3d9b45" /><path d="M7 12C3 13 3 18 6 21M17 12C21 13 21 18 18 21" fill="none" stroke="#6b7f6b" strokeWidth="2" /><circle cx="12" cy="10" r="2.800" fill="#8fd6a0" /><path d="M9 17H15L12 21Z" fill="#2d6b33" /></svg> },
  { name: "Code", open: true, icon: <svg viewBox="0 0 24 24" className={big}><path d="M18 0L24 2.500V20.500L18 23.500L0 19.500L18 20.500Z" fill="#0a7ed3" /><path d="M2 7L14.500 16V4L2 13.500" fill="none" stroke="#1485d6" strokeWidth="2.400" /></svg> },
  { name: "Postman", icon: <svg viewBox="0 0 24 24" className={big}><circle cx="13" cy="12" r="10.500" fill="#f15a29" /><path d="M2 18L8 22H2Z" fill="#d9531e" /><circle cx="16.500" cy="7" r="3" fill="none" stroke="#fff" strokeWidth="1.500" /><path d="M14 10L7 18M15 12L9 18M15 11L18 14L14 18" stroke="#fff" strokeWidth="1.400" fill="none" /></svg> },
  { name: "FileZilla", icon: <svg viewBox="0 0 24 24" className={big}><rect x=".5" y=".5" width="23" height="23" fill="#b80000" stroke="#8a0000" strokeDasharray="2 1" /><path d="M4.500 19L7.500 5H15M6 11H12M12 11H19L11 19.500H18" fill="none" stroke="#fff" strokeWidth="2.600" /></svg> },
  { name: "Wings", icon: <svg viewBox="0 0 24 24" className={big}><path d="M6 3C10 -1 16 1 15 8C12 7 10 3 6 3Z" fill="#8cc152" /><path d="M23 3C24 9 21 14 15 13C18 10 18 5 23 3Z" fill="#3b4f9b" /><path d="M0 11C3 5 9 6 10 10C7 9 3 10 2 14Z" fill="#f0a63c" /><path d="M5 14C6 11 9 11 10 14C11 18 15 20 18 18C15 24 8 24 9 18C9 16 7 14 5 14Z" fill="#cf3434" /></svg> },
  { name: "PowerShell", open: true, icon: <svg viewBox="0 0 24 24" className={big}><path d="M5 3H24L20 21H1Z" fill="#4f83dd" /><path d="M7 6.500L13 12L5.500 17.500M12 17.500H18" fill="none" stroke="#fff" strokeWidth="2.200" /></svg> },
  { name: "Word", open: true, icon: <svg viewBox="0 0 24 24" className={big}><path d="M11 4H23V21H11Z" fill="#fff" stroke="#2b579a" /><path d="M14 7.500H22M14 10.500H22M14 13.500H22M14 16.500H22" stroke="#2b579a" strokeWidth="1.300" /><path d="M1 3L14 1V24L1 21Z" fill="#2b579a" /><path d="M3 8.500L5 15.500L7.500 9L10 15.500L12 8.500" fill="none" stroke="#fff" strokeWidth="1.600" /></svg> },
  { name: "Work Manager", open: true, icon: <Triangle className="h-[18px] w-5" color="#343a40" /> },
];

function Taskbar() {
  return (
    <footer className="flex h-10 shrink-0 bg-[#0d1014] text-white">
      <button aria-label="Start" className="flex w-12 items-center justify-center">
        <svg viewBox="0 0 16 16" className={ic} fill="#fff"><path d="M0 2.200L7 1.200V7.500H0ZM8 1L16 0V7.500H8ZM0 8.500H7V14.800L0 13.800ZM8 8.500H16V16L8 15Z" /></svg>
      </button>
      <button aria-label="Cortana" className="mr-[2px] flex w-12 items-center justify-center">
        <svg viewBox="0 0 16 16" className={ic}><circle cx="8" cy="8" r="6.600" fill="none" stroke="#fff" strokeWidth="2" /></svg>
      </button>
      {apps.map((a) => (
        <button key={a.name} aria-label={a.name} className={`flex w-[49px] shrink-0 flex-col items-center ${a.active ? "bg-[#3b3f44]" : ""}`}>
          <span className="flex flex-1 items-center">{a.icon}</span>
          <span className={`h-[2px] ${a.active ? "w-full" : "w-10"} ${a.open ? "bg-[#7cbcf2]" : ""}`} />
        </button>
      ))}
      <div className="ml-auto flex shrink-0 items-center font-['Open_Sans',sans-serif] text-xs">
        <svg width="12" height="7" viewBox="0 0 12 7" fill="none" stroke="#fff" strokeWidth="1.300" aria-hidden="true"><path d="M.5 6.500L6 1L11.500 6.500" /></svg>
        <svg width="17" height="12" viewBox="0 0 17 12" className="ml-[9px]" fill="none" stroke="#fff" aria-hidden="true"><path d="M5.500 2.500H15V10.500H5V7.500M15.500 4.500V8.500M1 1V4Q1 6 2.500 6T5 4V1M0 2.500H5.500M2.500 6V10.500H5" /><path d="M6 5H9V9H6Z" fill="#fff" /></svg>
        <svg width="17" height="16" viewBox="0 0 17 16" className="ml-2" fill="none" aria-hidden="true"><path d="M3 0V6M.500 1.500L5.500 4.500M5.500 1.500L.500 4.500" stroke="#fff" /><path d="M4 14A12 12 0 0 1 15.500 3M7 14.500A8.500 8.500 0 0 1 15.500 6M9.500 15A6 6 0 0 1 15.500 9M12 15A3.500 3.500 0 0 1 15.500 12" stroke="#8a8d90" strokeWidth="1.300" /></svg>
        <svg width="17" height="14" viewBox="0 0 17 14" className="ml-2" fill="none" stroke="#fff" aria-hidden="true"><path d="M.5 4.500H3L6.500 1.500V12.500L3 9.500H.5ZM9 5Q10 7 9 9M11.500 3Q13.500 7 11.500 11M14 1Q17.500 7 14 13" /></svg>
        <span className="ml-[9px] w-6">ENG</span>
        <div className="ml-2 w-[68px] text-center text-[11px] leading-[18px]">
          <p>9:58 AM</p>
          <p>11/16/2018</p>
        </div>
        <button aria-label="Notifications" className="ml-3">
          <svg width="17" height="16" viewBox="0 0 17 16" fill="none" stroke="#fff" strokeWidth="1.200"><path d="M.8 .8H16V12.500H10.500L8.500 15L6.500 12.500H.8Z" /></svg>
        </button>
        <span className="ml-[19px] mr-1 h-10 w-px bg-[#55585b]" />
      </div>
    </footer>
  );
}

export default function App() {
  return (
    <div className="flex h-screen flex-col overflow-hidden bg-white font-['Noto_Sans',sans-serif]">
      <div className="relative flex-1 overflow-hidden bg-[#d4d6d8]">
        <div className="flex h-6 items-center gap-[7px] bg-white px-px text-xs text-[#8c8c8c]">
          <Folder />
          <span className="h-4 w-px bg-[#999999]" />
          <svg width="14" height="16" viewBox="0 0 14 16" className="ml-1" aria-hidden="true"><path d="M.5 .5H9L12.500 4V15.500H.5Z" fill="#fff" stroke="#888" /><path d="M3 8L6 11L11 6" fill="none" stroke="#d4572a" strokeWidth="2" /></svg>
          <Folder />
          <svg width="8" height="7" viewBox="0 0 8 7" className="mt-1" aria-hidden="true"><path d="M0 0H8V1H0ZM1 3H7L4 6.500Z" fill="#000" /></svg>
          <span className="h-4 w-px bg-[#999999]" />
          <span className="font-['Open_Sans',sans-serif]">TotNghiep</span>
        </div>
        <span className="absolute bottom-0 right-[26px] h-1 w-[22px] border border-[#3c8fc0] bg-[#a9c6d6]" />
        <MessageWindow />
        <TaskWindow />
      </div>
      <Taskbar />
    </div>
  );
}
